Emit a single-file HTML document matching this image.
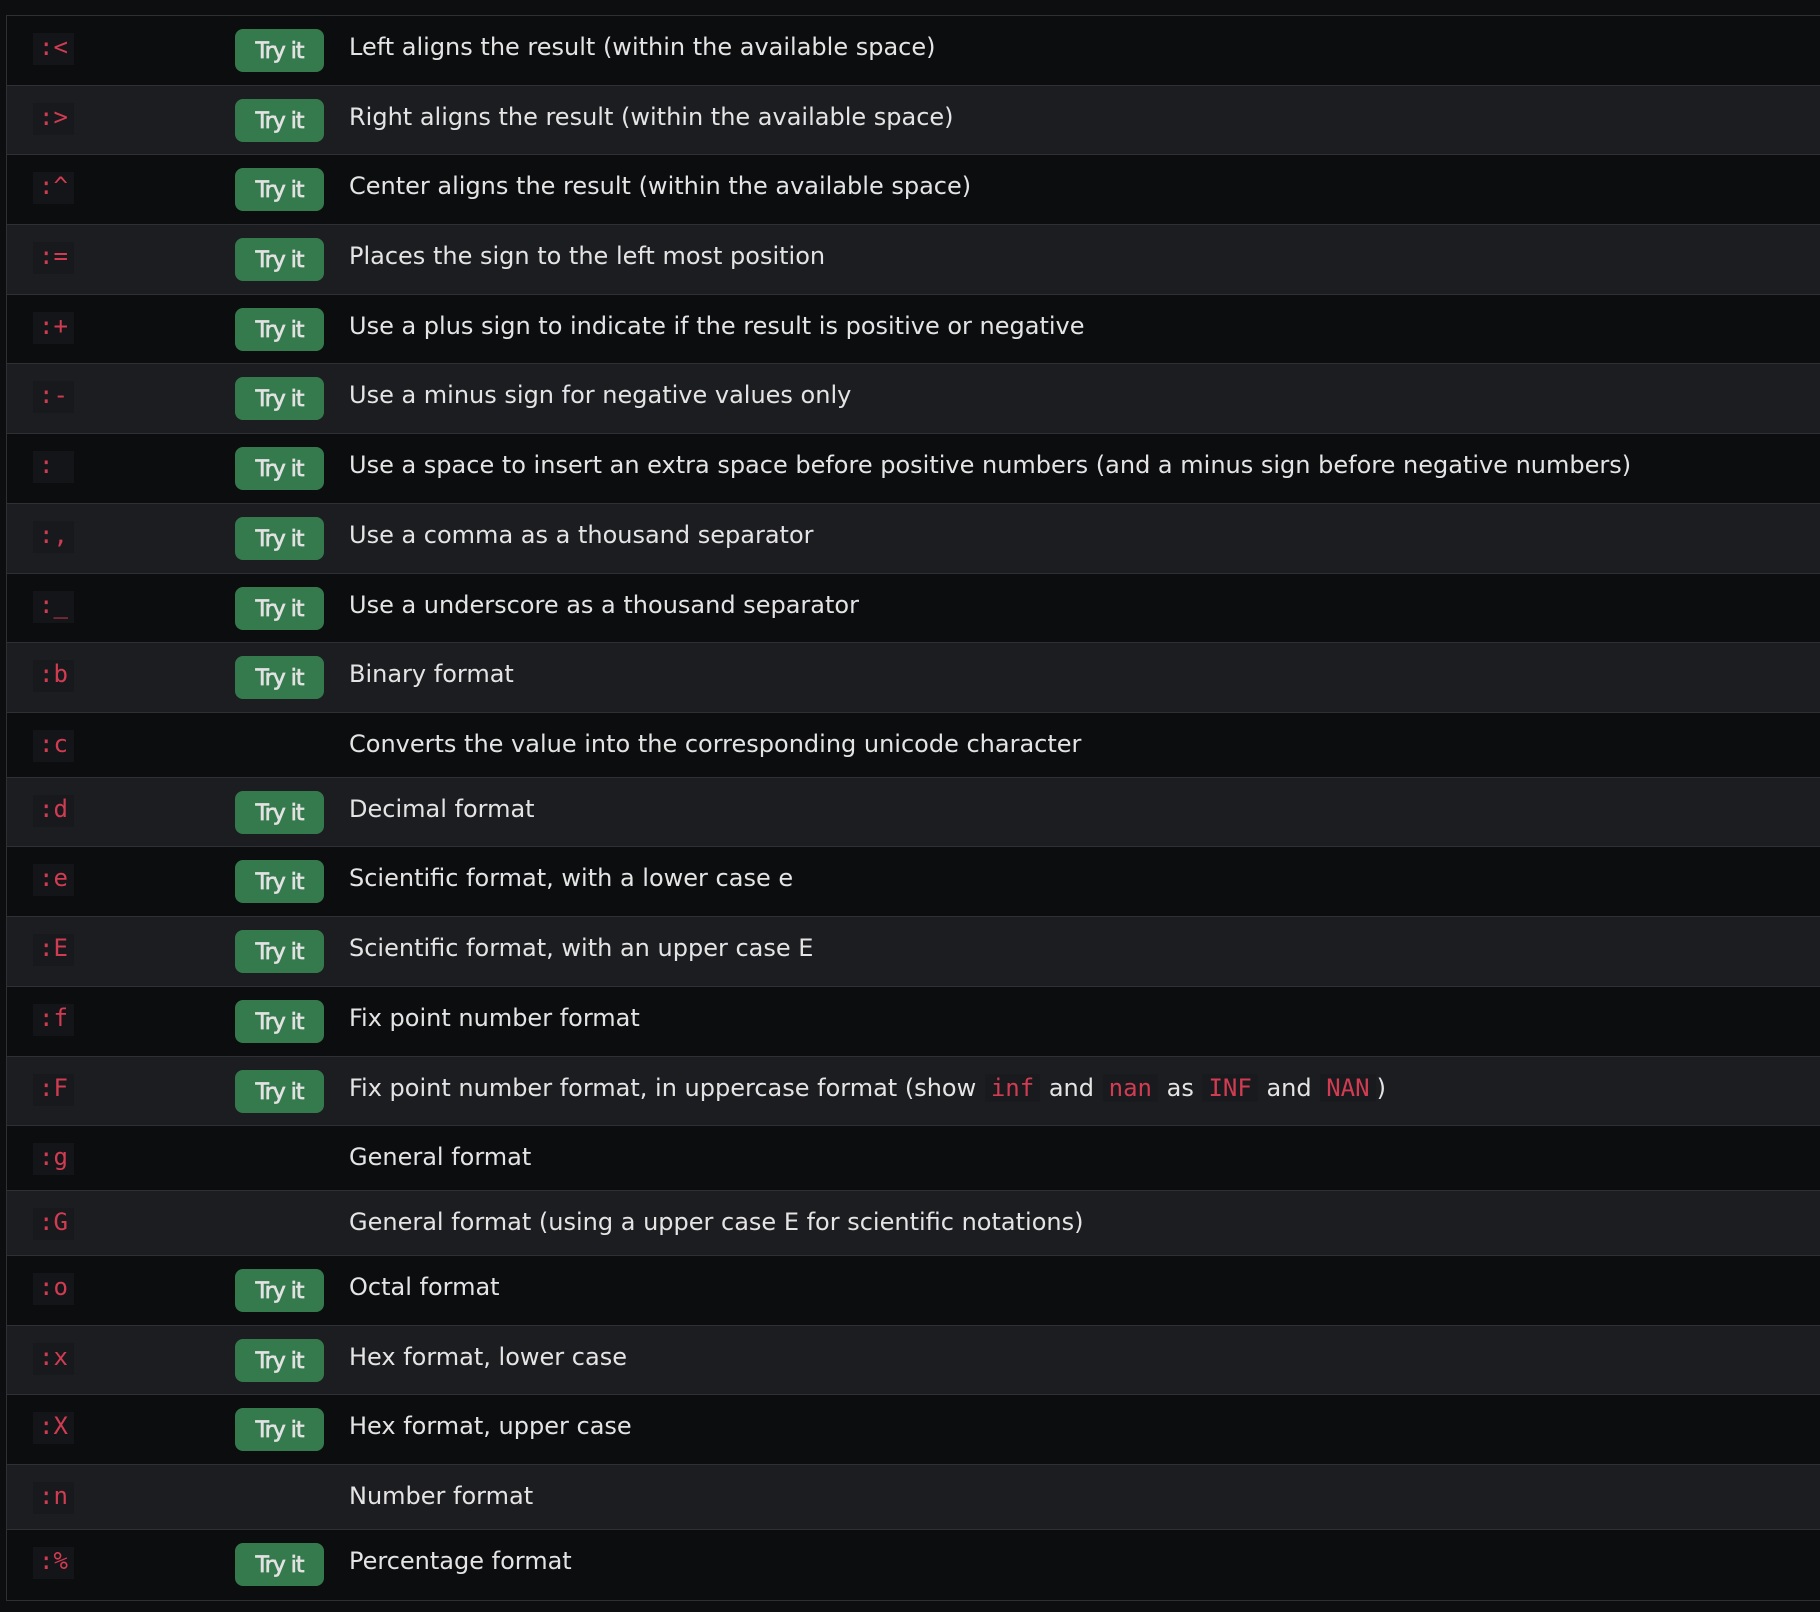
<!DOCTYPE html>
<html><head><meta charset="utf-8">
<style>
html,body{margin:0;padding:0;background:#0d0e10;width:1820px;height:1612px;overflow:hidden}
.tbl{position:absolute;left:6px;top:15px;width:1830px;border-top:1px solid #2f3033;border-left:1px solid #2f3033;border-bottom:1px solid #2f3033}
.row{position:relative;box-sizing:border-box;border-bottom:1px solid #2f3033;height:69.7px;background:#0c0d0f}
.row:last-child{border-bottom:none}
.row.e{background:#1c1d20}
.row.nb{height:64.9px}
.code{position:absolute;left:26px;top:17px;height:32px;line-height:32px;padding:0 6px;background:#141518;color:#d23c52;font:24px "DejaVu Sans Mono","Liberation Mono",monospace}
.row.e .code{background:#18191c}
.btn{position:absolute;left:228px;top:13px;width:89px;height:43px;border-radius:8px;background:#357a4d;color:#e2e2e2;font:22px "DejaVu Sans","Liberation Sans",sans-serif;line-height:45px;text-align:center;letter-spacing:-1px;-webkit-text-stroke:0.7px #e2e2e2}
.d{position:absolute;left:342px;top:17px;line-height:32px;color:#e4e4e4;font:24px "DejaVu Sans","Liberation Sans",sans-serif;white-space:nowrap}
.ic{background:#191a1d;color:#d23c52;font:24px "DejaVu Sans Mono","Liberation Mono",monospace;padding:0 6px;margin:0 1px}
</style></head><body>
<div class="tbl">
<div class="row"><span class="code">:&lt;</span><span class="btn">Try it</span><span class="d">Left aligns the result (within the available space)</span></div>
<div class="row e"><span class="code">:&gt;</span><span class="btn">Try it</span><span class="d">Right aligns the result (within the available space)</span></div>
<div class="row"><span class="code">:^</span><span class="btn">Try it</span><span class="d">Center aligns the result (within the available space)</span></div>
<div class="row e"><span class="code">:=</span><span class="btn">Try it</span><span class="d">Places the sign to the left most position</span></div>
<div class="row"><span class="code">:+</span><span class="btn">Try it</span><span class="d">Use a plus sign to indicate if the result is positive or negative</span></div>
<div class="row e"><span class="code">:-</span><span class="btn">Try it</span><span class="d">Use a minus sign for negative values only</span></div>
<div class="row"><span class="code">:&nbsp;</span><span class="btn">Try it</span><span class="d">Use a space to insert an extra space before positive numbers (and a minus sign before negative numbers)</span></div>
<div class="row e"><span class="code">:,</span><span class="btn">Try it</span><span class="d">Use a comma as a thousand separator</span></div>
<div class="row"><span class="code">:_</span><span class="btn">Try it</span><span class="d">Use a underscore as a thousand separator</span></div>
<div class="row e"><span class="code">:b</span><span class="btn">Try it</span><span class="d">Binary format</span></div>
<div class="row nb"><span class="code">:c</span><span class="d">Converts the value into the corresponding unicode character</span></div>
<div class="row e"><span class="code">:d</span><span class="btn">Try it</span><span class="d">Decimal format</span></div>
<div class="row"><span class="code">:e</span><span class="btn">Try it</span><span class="d">Scientific format, with a lower case e</span></div>
<div class="row e"><span class="code">:E</span><span class="btn">Try it</span><span class="d">Scientific format, with an upper case E</span></div>
<div class="row"><span class="code">:f</span><span class="btn">Try it</span><span class="d">Fix point number format</span></div>
<div class="row e"><span class="code">:F</span><span class="btn">Try it</span><span class="d">Fix point number format, in uppercase format (show <span class="ic">inf</span> and <span class="ic">nan</span> as <span class="ic">INF</span> and <span class="ic">NAN</span>)</span></div>
<div class="row nb"><span class="code">:g</span><span class="d">General format</span></div>
<div class="row e nb"><span class="code">:G</span><span class="d">General format (using a upper case E for scientific notations)</span></div>
<div class="row"><span class="code">:o</span><span class="btn">Try it</span><span class="d">Octal format</span></div>
<div class="row e"><span class="code">:x</span><span class="btn">Try it</span><span class="d">Hex format, lower case</span></div>
<div class="row"><span class="code">:X</span><span class="btn">Try it</span><span class="d">Hex format, upper case</span></div>
<div class="row e nb"><span class="code">:n</span><span class="d">Number format</span></div>
<div class="row"><span class="code">:%</span><span class="btn">Try it</span><span class="d">Percentage format</span></div>
</div>
</body></html>
